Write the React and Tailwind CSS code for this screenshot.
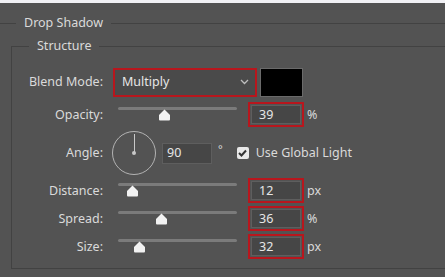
import React from 'react'

const Thumb = ({ left }) => (
  <svg
    className="absolute top-[2px]"
    style={{ left: left - 6 }}
    width="13"
    height="12"
    viewBox="0 0 13 12"
  >
    <path d="M6.5 0.5 L12 6 V10.5 Q12 11.5 11 11.5 H2 Q1 11.5 1 10.5 V6 Z" fill="#f2f2f2" />
  </svg>
)

const Slider = ({ pos }) => (
  <div className="relative ml-[6px] h-[16px] w-[119px]">
    <div className="h-[3px] w-full rounded-full bg-[#7b7b7b]" />
    <Thumb left={pos} />
  </div>
)

const NumField = ({ value, unit }) => (
  <div className="flex items-center">
    <div className="ml-[11px] h-[25px] w-[56px] border-2 border-[#b8161d] p-[1px]">
      <div className="flex h-full w-full items-center border border-[#5e5e5e] bg-[#464646] pl-[7px] text-[#e6e6e6]">
        {value}
      </div>
    </div>
    <span className="ml-[3px]">{unit}</span>
  </div>
)

const Row = ({ label, h, mt, children }) => (
  <div className="grid grid-cols-[91px_1fr] items-center gap-x-[9px]" style={{ height: h, marginTop: mt }}>
    <div className="text-right">{label}</div>
    <div className="flex items-center">{children}</div>
  </div>
)

export default function App() {
  return (
    <div
      className="h-[277px] w-[445px] overflow-hidden bg-[#535353] text-[12.5px] leading-[16px] text-[#dadada]"
      style={{ fontFamily: '"Noto Sans", "Open Sans", sans-serif' }}
    >
      <div className="h-[3px] bg-[#f1f1f5]" />
      <fieldset className="mt-[12px] border-t border-[#424242]">
        <legend className="ml-[16px] px-[8px] leading-[16px]">Drop Shadow</legend>
        <fieldset className="ml-[11px] mt-[7px] border-l border-t border-b border-[#424242] pb-[10px]">
          <legend className="ml-[17px] px-[8px] leading-[16px]">Structure</legend>

          <Row label="Blend Mode:" h={30} mt={13}>
            <div className="ml-[1px] flex h-[29px] w-[144px] items-center justify-between border-2 border-[#b8161d] bg-[#4a4a4a] pl-[7px] pr-[6px] text-[#e6e6e6]">
              <span>Multiply</span>
              <svg width="9" height="6" viewBox="0 0 9 6">
                <path d="M1 1 L4.5 4.5 L8 1" stroke="#bdbdbd" strokeWidth="1.3" fill="none" />
              </svg>
            </div>
            <div className="ml-[3px] h-[29px] w-[43px] border border-[#6a6a6a] bg-black" />
          </Row>

          <Row label="Opacity:" h={27} mt={4}>
            <Slider pos={46} />
            <NumField value="39" unit="%" />
          </Row>

          <Row label="Angle:" h={44} mt={3}>
            <div className="relative h-[44px] w-[44px] rounded-full border border-[#b3b3b3]">
              <div className="absolute left-[20.5px] top-[2px] h-[19px] w-[1px] bg-[#c8c8c8]" />
              <div className="absolute left-[19px] top-[19px] h-[4px] w-[4px] rounded-full bg-[#c8c8c8]" />
            </div>
            <div className="ml-[6px] flex h-[21px] w-[50px] items-center border border-[#5e5e5e] bg-[#464646] pl-[4px] text-[#e6e6e6]">
              90
            </div>
            <span className="ml-[6px] -mt-[8px] text-[11px]">°</span>
            <div className="ml-[14px] flex h-[12px] w-[12px] items-center justify-center rounded-[2px] bg-[#e8e8e8]">
              <svg width="9" height="8" viewBox="0 0 9 8">
                <path d="M1 4 L3.5 6.5 L8 1.5" stroke="#333" strokeWidth="2" fill="none" />
              </svg>
            </div>
            <span className="ml-[7px]">Use Global Light</span>
          </Row>

          <Row label="Distance:" h={24} mt={3}>
            <Slider pos={14} />
            <NumField value="12" unit="px" />
          </Row>

          <Row label="Spread:" h={24} mt={4}>
            <Slider pos={43} />
            <NumField value="36" unit="%" />
          </Row>

          <Row label="Size:" h={24} mt={4}>
            <Slider pos={21} />
            <NumField value="32" unit="px" />
          </Row>
        </fieldset>
      </fieldset>
    </div>
  )
}
